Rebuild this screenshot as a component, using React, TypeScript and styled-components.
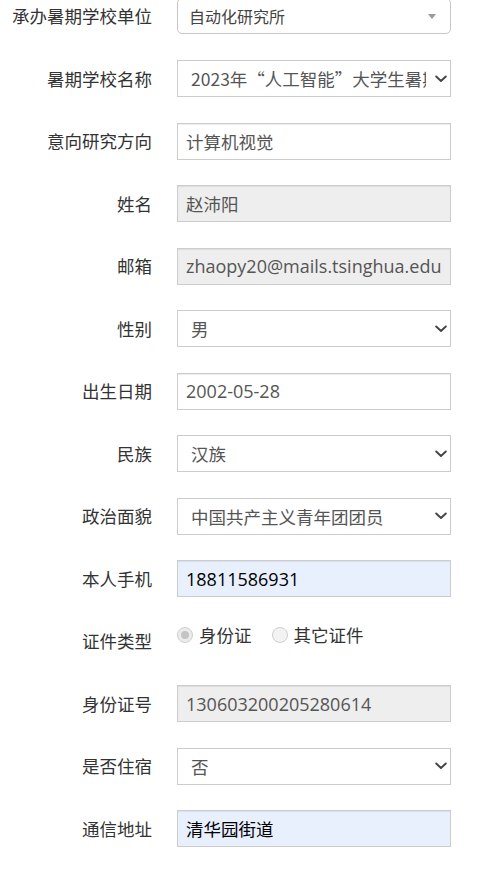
import React from "react";
import styled, { createGlobalStyle } from "styled-components";

const GlobalStyle = createGlobalStyle`
  html, body {
    margin: 0;
    padding: 0;
    background: #ffffff;
    overflow: hidden;
  }
  body {
    font-family: "Open Sans", "Noto Sans CJK SC", sans-serif;
  }
`;

const CJK = `"Noto Sans CJK SC", "Open Sans", sans-serif`;
const LATIN = `"Open Sans", "Noto Sans CJK SC", sans-serif`;

const Form = styled.form`
  display: flex;
  flex-direction: column;
  margin-top: -2.5px;
  width: 484px;
`;

const Row = styled.div<{ $h?: number }>`
  display: grid;
  grid-template-columns: 152px 274px;
  grid-template-rows: ${(p) => p.$h ?? 37}px;
  column-gap: 25px;
  margin-bottom: ${(p) => 62.5 - (p.$h ?? 37)}px;
`;

const Label = styled.label`
  display: flex;
  align-items: center;
  justify-content: flex-end;
  font-family: ${CJK};
  font-size: 17.5px;
  color: #333333;
  white-space: nowrap;
  line-height: 1;
`;

const TextInput = styled.input<{ $variant?: "plain" | "disabled" | "filled"; $cjk?: boolean }>`
  box-sizing: border-box;
  width: 100%;
  height: 100%;
  margin: 0;
  padding: 0 8px;
  border: 1px solid #cccccc;
  border-radius: 0;
  outline: none;
  font-family: ${LATIN};
  font-size: ${(p) => (p.$cjk ? "17.5px" : "18px")};
  color: ${(p) => (p.$variant === "filled" ? "#000000" : "#555555")};
  background: ${(p) =>
    p.$variant === "disabled"
      ? "#eeeeee"
      : p.$variant === "filled"
      ? "#e8f0fe"
      : "#ffffff"};
  box-shadow: inset 0 1px 1px rgba(0, 0, 0, 0.075);
  -webkit-text-fill-color: ${(p) =>
    p.$variant === "filled" ? "#000000" : "#555555"};
  opacity: 1;
`;

const SelectWrap = styled.div`
  position: relative;
  height: 100%;
`;

const NativeSelect = styled.select<{ $rounded?: boolean }>`
  appearance: none;
  -webkit-appearance: none;
  box-sizing: border-box;
  width: 100%;
  height: 100%;
  margin: 0;
  padding: ${(p) => (p.$rounded ? "0 30px 0 11px" : "0 24px 0 13px")};
  border: 1px solid ${(p) => (p.$rounded ? "#c6c6c6" : "#cccccc")};
  border-radius: ${(p) => (p.$rounded ? "5px" : "0")};
  background: #ffffff;
  outline: none;
  font-family: ${CJK};
  font-size: ${(p) => (p.$rounded ? "16px" : "17.5px")};
  color: ${(p) => (p.$rounded ? "#444444" : "#555555")};
  text-overflow: clip;
  white-space: nowrap;
`;

const Chevron = styled.svg`
  position: absolute;
  right: 4px;
  top: 50%;
  margin-top: -4px;
  width: 12px;
  height: 8px;
  pointer-events: none;
`;

const Triangle = styled.span`
  position: absolute;
  right: 15px;
  top: 50%;
  margin-top: -2px;
  width: 0;
  height: 0;
  border-style: solid;
  border-width: 5px 4px 0 4px;
  border-color: #999999 transparent transparent transparent;
  pointer-events: none;
`;

const RadioGroup = styled.div`
  display: flex;
  align-items: center;
  height: 24px;
  align-self: start;
`;

const RadioOption = styled.label`
  display: flex;
  align-items: center;
  gap: 6px;
  margin-right: 20px;
  font-family: ${CJK};
  font-size: 17.5px;
  color: #333333;
  white-space: nowrap;
  line-height: 1;
`;

const RadioInput = styled.input`
  appearance: none;
  -webkit-appearance: none;
  box-sizing: border-box;
  width: 16px;
  height: 16px;
  margin: 0;
  border-radius: 50%;
  border: 1px solid #cfcfcf;
  background: #f3f3f3;
  position: relative;
  &:checked {
    background: #ececec;
  }
  &:checked::after {
    content: "";
    position: absolute;
    left: 3px;
    top: 3px;
    width: 8px;
    height: 8px;
    border-radius: 50%;
    background: #c4c4c4;
  }
`;

const ChevronIcon = () => (
  <Chevron viewBox="0 0 12 8">
    <path
      d="M1.2 1.5 L6 6 L10.8 1.5"
      fill="none"
      stroke="#444444"
      strokeWidth="1.9"
      strokeLinecap="round"
      strokeLinejoin="round"
    />
  </Chevron>
);

const Select: React.FC<{ value: string; options: string[]; rounded?: boolean }> = ({
  value,
  options,
  rounded,
}) => (
  <SelectWrap>
    <NativeSelect $rounded={rounded} defaultValue={value}>
      {options.map((o) => (
        <option key={o} value={o}>
          {o}
        </option>
      ))}
    </NativeSelect>
    {rounded ? <Triangle /> : <ChevronIcon />}
  </SelectWrap>
);

export default function App() {
  return (
    <>
      <GlobalStyle />
      <Form onSubmit={(e) => e.preventDefault()}>
        <Row $h={36}>
          <Label>承办暑期学校单位</Label>
          <Select rounded value="自动化研究所" options={["自动化研究所"]} />
        </Row>
        <Row>
          <Label>暑期学校名称</Label>
          <Select
            value="2023年“人工智能”大学生暑期学校"
            options={["2023年“人工智能”大学生暑期学校"]}
          />
        </Row>
        <Row>
          <Label>意向研究方向</Label>
          <TextInput $cjk defaultValue="计算机视觉" />
        </Row>
        <Row>
          <Label>姓名</Label>
          <TextInput $cjk $variant="disabled" value="赵沛阳" readOnly disabled />
        </Row>
        <Row>
          <Label>邮箱</Label>
          <TextInput
            $variant="disabled"
            value="zhaopy20@mails.tsinghua.edu.cn"
            readOnly
            disabled
          />
        </Row>
        <Row>
          <Label>性别</Label>
          <Select value="男" options={["男", "女"]} />
        </Row>
        <Row>
          <Label>出生日期</Label>
          <TextInput defaultValue="2002-05-28" />
        </Row>
        <Row>
          <Label>民族</Label>
          <Select value="汉族" options={["汉族"]} />
        </Row>
        <Row>
          <Label>政治面貌</Label>
          <Select value="中国共产主义青年团团员" options={["中国共产主义青年团团员"]} />
        </Row>
        <Row>
          <Label>本人手机</Label>
          <TextInput $variant="filled" defaultValue="18811586931" />
        </Row>
        <Row>
          <Label>证件类型</Label>
          <RadioGroup>
            <RadioOption>
              <RadioInput type="radio" name="idtype" defaultChecked disabled />
              身份证
            </RadioOption>
            <RadioOption>
              <RadioInput type="radio" name="idtype" disabled />
              其它证件
            </RadioOption>
          </RadioGroup>
        </Row>
        <Row>
          <Label>身份证号</Label>
          <TextInput $variant="disabled" value="130603200205280614" readOnly disabled />
        </Row>
        <Row>
          <Label>是否住宿</Label>
          <Select value="否" options={["否", "是"]} />
        </Row>
        <Row>
          <Label>通信地址</Label>
          <TextInput $cjk $variant="filled" defaultValue="清华园街道" />
        </Row>
      </Form>
    </>
  );
}
